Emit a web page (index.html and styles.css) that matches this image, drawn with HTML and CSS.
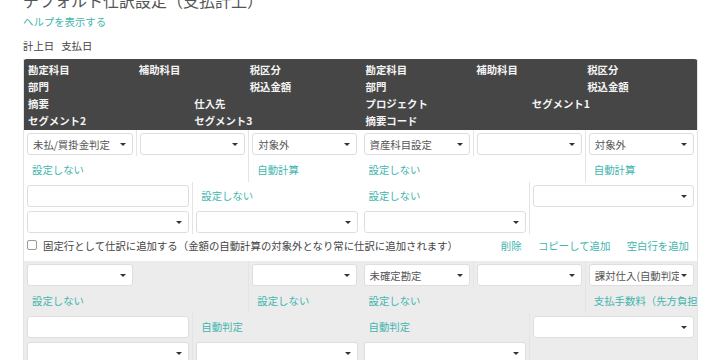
FILE: index.html
```html
<!DOCTYPE html>
<html>
	<head>
		<meta charset="utf-8">
		<title>デフォルト仕訳設定</title>
		<link rel="stylesheet" href="styles.css">
	</head>
	<body>
		<div class="page">
			<h1 class="title">デフォルト仕訳設定（支払計上）</h1>
			<a class="help" href="#help">ヘルプを表示する</a>
			<div class="dates"><span>計上日</span><span>支払日</span></div>

			<div class="journal">
				<!-- 見出し -->
				<div class="head">
					<div class="side">
						<div class="hrow three"><span>勘定科目</span><span>補助科目</span><span>税区分</span></div>
						<div class="hrow three"><span>部門</span><span></span><span>税込金額</span></div>
						<div class="hrow two"><span>摘要</span><span>仕入先</span></div>
						<div class="hrow two"><span>セグメント2</span><span>セグメント3</span></div>
					</div>
					<div class="side">
						<div class="hrow three"><span>勘定科目</span><span>補助科目</span><span>税区分</span></div>
						<div class="hrow three"><span>部門</span><span></span><span>税込金額</span></div>
						<div class="hrow two"><span>プロジェクト</span><span>セグメント1</span></div>
						<div class="hrow two"><span>摘要コード</span><span></span></div>
					</div>
				</div>

				<!-- 1行目 -->
				<div class="entry">
					<div class="lines">
						<div class="side">
							<div class="cells three">
								<div class="cell">
									<button class="sel"><span>未払/買掛金判定</span></button>
									<a class="link" href="#">設定しない</a>
								</div>
								<div class="cell"><button class="sel"><span></span></button></div>
								<div class="cell">
									<button class="sel"><span>対象外</span></button>
									<a class="link" href="#">自動計算</a>
								</div>
							</div>
							<div class="cells two">
								<div class="cell">
									<input class="txt" type="text">
									<button class="sel"><span></span></button>
								</div>
								<div class="cell">
									<a class="link" href="#">設定しない</a>
									<button class="sel"><span></span></button>
								</div>
							</div>
						</div>
						<div class="side">
							<div class="cells three">
								<div class="cell">
									<button class="sel"><span>資産科目設定</span></button>
									<a class="link" href="#">設定しない</a>
								</div>
								<div class="cell"><button class="sel"><span></span></button></div>
								<div class="cell">
									<button class="sel"><span>対象外</span></button>
									<a class="link" href="#">自動計算</a>
								</div>
							</div>
							<div class="cells two">
								<div class="cell">
									<a class="link" href="#">設定しない</a>
									<button class="sel"><span></span></button>
								</div>
								<div class="cell"><button class="sel"><span></span></button></div>
							</div>
						</div>
					</div>
					<div class="foot">
						<label class="fixed"><span class="check"></span>固定行として仕訳に追加する（金額の自動計算の対象外となり常に仕訳に追加されます）</label>
						<div class="actions">
							<a href="#">削除</a>
							<a href="#">コピーして追加</a>
							<a href="#">空白行を追加</a>
						</div>
					</div>
				</div>

				<!-- 2行目 -->
				<div class="entry alt">
					<div class="lines">
						<div class="side">
							<div class="cells three">
								<div class="cell">
									<button class="sel"><span></span></button>
									<a class="link" href="#">設定しない</a>
								</div>
								<div class="cell empty"></div>
								<div class="cell">
									<button class="sel"><span></span></button>
									<a class="link" href="#">設定しない</a>
								</div>
							</div>
							<div class="cells two">
								<div class="cell">
									<input class="txt" type="text">
									<button class="sel"><span></span></button>
								</div>
								<div class="cell">
									<a class="link" href="#">自動判定</a>
									<button class="sel"><span></span></button>
								</div>
							</div>
						</div>
						<div class="side">
							<div class="cells three">
								<div class="cell">
									<button class="sel"><span>未確定勘定</span></button>
									<a class="link" href="#">設定しない</a>
								</div>
								<div class="cell"><button class="sel"><span></span></button></div>
								<div class="cell">
									<button class="sel"><span>課対仕入(自動判定)</span></button>
									<a class="link" href="#">支払手数料（先方負担）</a>
								</div>
							</div>
							<div class="cells two">
								<div class="cell">
									<a class="link" href="#">自動判定</a>
									<button class="sel"><span></span></button>
								</div>
								<div class="cell"><button class="sel"><span></span></button></div>
							</div>
						</div>
					</div>
				</div>
			</div>
		</div>
	</body>
</html>
```

FILE: styles.css
```css
* {box-sizing: border-box;}
html,body {margin: 0;padding: 0;background: #fff;overflow: hidden;}
body {font-family: "Noto Sans CJK JP", "Noto Sans", sans-serif;font-size: 10.4px;color: #555;}
a {color: #3fb6ae;text-decoration: none;}

.page {padding: 0 22px 0 23px;}
.title {margin: -11px 0 0;font-size: 16px;line-height: 22px;font-weight: normal;color: #555;white-space: nowrap;}
.help {display: block;margin-top: 2px;line-height: 18px;}
.dates {margin-top: 6px;line-height: 18px;color: #444;}
.dates span {margin-right: 7px;}

/* 仕訳テーブル */
.journal {margin-top: 4px;border-left: 1px solid #e4e4e4;border-right: 1px solid #e4e4e4;overflow: hidden;}
.head {display: grid;grid-template-columns: 1fr 1fr;padding: 2px 0 1px;background: #464646;color: #f4f4f4;
	font-weight: bold;border-radius: 4px 4px 0 0;margin: 0 -1px;}
.hrow {display: grid;height: 17px;line-height: 17px;padding-left: 5px;}
.hrow.three {grid-template-columns: repeat(3, 1fr);}
.hrow.two {grid-template-columns: repeat(2, 1fr);}

.lines {display: grid;grid-template-columns: 1fr 1fr;}
.cells {display: grid;}
.cells.three {grid-template-columns: repeat(3, 1fr);align-items: start;}
.cells.two {grid-template-columns: repeat(2, 1fr);}
.cell {padding: 3px 3px 0;overflow: hidden;}
.cell + .cell {border-left: 1px solid #e4e4e4;}
.cell.empty {border-left: 0;}
.cells.two .cell {padding-bottom: 1px;}
.cells.two .cell > * + * {margin-top: 4px;}
.cells.three .cell {padding-bottom: 1px;}

.sel {display: flex;align-items: center;width: 100%;height: 22px;margin: 0;padding: 0 6px 0 5px;
	background: #fff;border: 1px solid #dedede;border-radius: 3px;font: inherit;color: #555;text-align: left;}
.sel span {flex: 1;overflow: hidden;white-space: nowrap;}
.sel::after {content: "";margin-left: 2px;border-top: 3px solid #333;border-left: 3px solid transparent;border-right: 3px solid transparent;}
.txt {display: block;width: 100%;height: 22px;margin: 0;border: 1px solid #dedede;border-radius: 3px;background: #fff;}
.link {display: block;height: 22px;line-height: 22px;padding-left: 5px;white-space: nowrap;}
.cells.three .link {margin-top: 4px;}

.foot {display: flex;justify-content: space-between;align-items: center;height: 27px;padding: 0 8px 5px 3px;}
.fixed {display: flex;align-items: center;color: #444;}
.check {width: 10px;height: 10px;margin-right: 6px;border: 1px solid #999;border-radius: 2px;background: #fff;}
.actions a {margin-left: 14px;}

.entry.alt {background: #ececec;}
```
